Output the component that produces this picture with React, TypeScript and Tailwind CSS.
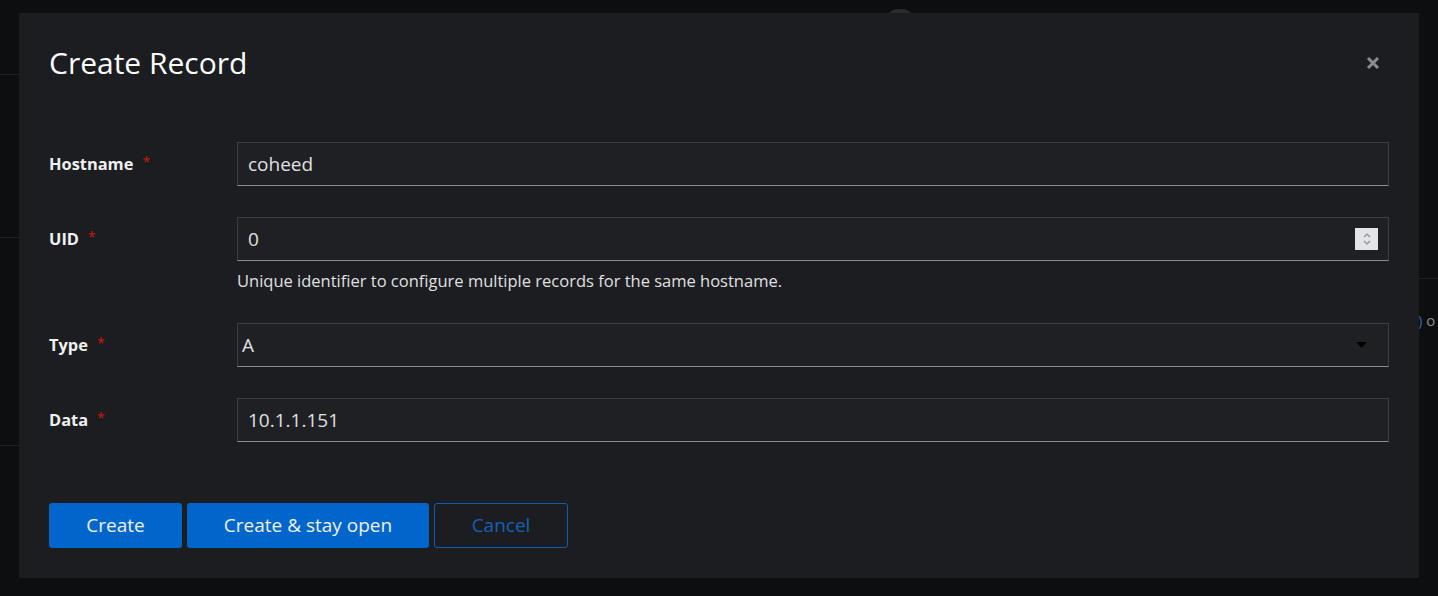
import React from "react";

const font = { fontFamily: '"Open Sans", "Noto Sans", sans-serif' };

function Label({ text }: { text: string }) {
  return (
    <div className="flex h-[44px] items-center text-[16.4px] font-bold text-[#f0f0f0]">
      {text}
      <span className="ml-[9px] -mt-[6px] text-[14px] font-normal text-[#c9190b]">*</span>
    </div>
  );
}

function Field({ children }: { children: React.ReactNode }) {
  return (
    <div className="flex h-[44px] items-center border border-[#3c3f42] border-b-[#8a8d90] bg-[#1e2024] text-[19px] text-[#e0e0e0]">
      {children}
    </div>
  );
}

export default function App() {
  return (
    <div className="relative h-[596px] w-[1438px] overflow-hidden bg-[#0d0e10]" style={font}>
      {/* background hints */}
      <div className="absolute left-0 top-[74px] h-px w-[19px] bg-[#1f2023]" />
      <div className="absolute left-0 top-[237px] h-px w-[19px] bg-[#1f2023]" />
      <div className="absolute left-0 top-[445px] h-px w-[19px] bg-[#1f2023]" />
      <div className="absolute left-[1419px] top-[278px] h-px w-[19px] bg-[#1f2023]" />
      <div className="absolute left-[1418px] top-[313px] text-[15px] leading-none text-[#8a8d90]">
        <span className="text-[#2b6cb0]">)</span> o
      </div>
      <div className="absolute left-[886px] top-[9px] h-[24px] w-[28px] rounded-full bg-[#2a2c30]" />

      <div className="absolute left-[19px] top-[13px] flex h-[565px] w-[1400px] flex-col bg-[#1b1d21] px-[30px] pt-[30px]">
        <div className="flex items-start justify-between">
          <h1 className="text-[30px] leading-[40px] text-white" style={{ fontFamily: '"Open Sans", sans-serif' }}>
            Create Record
          </h1>
          <svg className="mr-[9px] mt-[13px]" width="14" height="14" viewBox="0 0 14 14">
            <path d="M2 2 L12 12 M12 2 L2 12" stroke="#8a8d90" strokeWidth="3" strokeLinecap="butt" />
          </svg>
        </div>

        <div className="mt-[59px] grid grid-cols-[188px_1fr] gap-y-[31px]">
          <Label text="Hostname" />
          <Field>
            <span className="pl-[10px]">coheed</span>
          </Field>

          <Label text="UID" />
          <div className="flex flex-col">
            <Field>
              <span className="flex-1 pl-[10px]">0</span>
              <div className="mr-[10px] flex h-[22px] w-[23px] flex-col items-center justify-center bg-[#e3e3ea]">
                <svg width="10" height="16" viewBox="0 0 10 16">
                  <path d="M2 6 L5 3 L8 6 M2 10 L5 13 L8 10" stroke="#8c8c96" strokeWidth="1.2" fill="none" />
                </svg>
              </div>
            </Field>
            <div className="mt-[8px] text-[16.5px] leading-[23px] text-[#e0e0e0]">
              Unique identifier to configure multiple records for the same hostname.
            </div>
          </div>

          <Label text="Type" />
          <Field>
            <span className="flex-1 pl-[4px]">A</span>
            <svg className="mr-[21px]" width="11" height="6" viewBox="0 0 11 6">
              <path d="M0 0 L11 0 L5.5 6 Z" fill="#000" />
            </svg>
          </Field>

          <Label text="Data" />
          <Field>
            <span className="pl-[10px]">10.1.1.151</span>
          </Field>
        </div>

        <div className="mt-[61px] flex gap-[5px]">
          <button className="h-[45px] w-[133px] rounded-[3px] bg-[#0066cc] text-[19px] text-[#eef2f7]">
            Create
          </button>
          <button className="h-[45px] w-[242px] rounded-[3px] bg-[#0066cc] text-[19px] text-[#eef2f7]">
            Create &amp; stay open
          </button>
          <button className="h-[45px] w-[134px] rounded-[3px] border border-[#0b5eb8] text-[19px] text-[#1560b5]">
            Cancel
          </button>
        </div>
      </div>
    </div>
  );
}
